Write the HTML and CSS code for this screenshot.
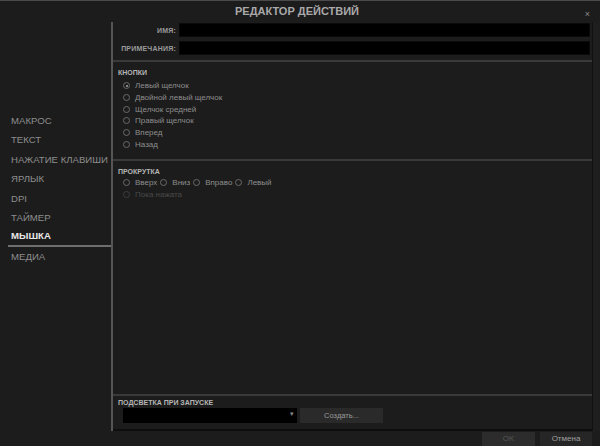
FILE: index.html
```html
<!DOCTYPE html>
<html>
<head>
<meta charset="utf-8">
<link rel="stylesheet" href="styles.css">
</head>
<body>
<div class="window">
  <div class="header">
    <div class="title">РЕДАКТОР ДЕЙСТВИЙ</div>
    <div class="close">×</div>
  </div>
  <div class="main">
    <nav class="nav">
      <div class="nav-item">МАКРОС</div>
      <div class="nav-item">ТЕКСТ</div>
      <div class="nav-item">НАЖАТИЕ КЛАВИШИ</div>
      <div class="nav-item">ЯРЛЫК</div>
      <div class="nav-item">DPI</div>
      <div class="nav-item">ТАЙМЕР</div>
      <div class="nav-item active">МЫШКА</div>
      <div class="nav-item">МЕДИА</div>
    </nav>
    <div class="divider"></div>
    <div class="panel">
      <div class="fields">
        <div class="field"><label class="field-label">ИМЯ:</label><div class="input"></div></div>
        <div class="field"><label class="field-label">ПРИМЕЧАНИЯ:</label><div class="input"></div></div>
      </div>
      <div class="sep"></div>
      <div class="section buttons">
        <div class="section-title">КНОПКИ</div>
        <div class="radio-list">
          <div class="radio checked"><span class="dot"></span>Левый щелчок</div>
          <div class="radio"><span class="dot"></span>Двойной левый щелчок</div>
          <div class="radio"><span class="dot"></span>Щелчок средней</div>
          <div class="radio"><span class="dot"></span>Правый щелчок</div>
          <div class="radio"><span class="dot"></span>Вперед</div>
          <div class="radio"><span class="dot"></span>Назад</div>
        </div>
      </div>
      <div class="sep"></div>
      <div class="section scroll">
        <div class="section-title">ПРОКРУТКА</div>
        <div class="radio-row">
          <div class="radio"><span class="dot"></span>Вверх</div>
          <div class="radio"><span class="dot"></span>Вниз</div>
          <div class="radio"><span class="dot"></span>Вправо</div>
          <div class="radio"><span class="dot"></span>Левый</div>
        </div>
        <div class="radio disabled"><span class="dot"></span>Пока нажата</div>
      </div>
      <div class="spacer"></div>
      <div class="sep"></div>
      <div class="section light">
        <div class="section-title">ПОДСВЕТКА ПРИ ЗАПУСКЕ</div>
        <div class="light-row">
          <div class="select"><span class="arrow">▾</span></div>
          <div class="btn-create">Создать...</div>
        </div>
      </div>
    </div>
    <div class="gutter"></div>
  </div>
  <div class="footer">
    <div class="btn ok">OK</div>
    <div class="btn cancel">Отмена</div>
  </div>
</div>
</body>
</html>
```

FILE: styles.css
```css
* { box-sizing: border-box; }
html, body {
  margin: 0;
  padding: 0;
  background: #1c1c1c;
}
body {
  width: 600px;
  height: 446px;
  overflow: hidden;
  font-family: "Liberation Sans", Arial, sans-serif;
  color: #8c8c8c;
}
.window {
  width: 600px;
  height: 446px;
  display: flex;
  flex-direction: column;
  border-top: 1px solid #4a4a4a;
  background: #1c1c1c;
}
.header {
  height: 21px;
  position: relative;
  display: flex;
  justify-content: center;
  align-items: center;
}
.title {
  font-size: 11px;
  font-weight: bold;
  color: #a9a9a9;
  margin-top: -1px;
  margin-right: 6px;
}
.close {
  position: absolute;
  right: 10px;
  top: 9px;
  font-size: 9px;
  line-height: 9px;
  color: #8a8a8a;
}
.main {
  height: 409px;
  display: flex;
}
.nav {
  width: 111px;
  padding-top: 89px;
  padding-left: 8px;
}
.nav-item {
  height: 19.4px;
  line-height: 19px;
  font-size: 9.6px;
  padding-left: 3px;
  color: #8d8d8d;
  white-space: nowrap;
}
.nav-item.active {
  color: #e8e8e8;
  font-weight: bold;
  border-bottom: 2px solid #6e6e6e;
  height: 20px;
  line-height: 18px;
}
.divider {
  width: 2px;
  background: #555;
}
.panel {
  width: 479px;
  display: flex;
  flex-direction: column;
  border-bottom: 2px solid #0e0e0e;
}
.gutter {
  width: 8px;
  border-left: 1px solid #111;
  background: #1e1e1e;
}
.fields {
  padding-top: 1px;
  display: flex;
  flex-direction: column;
  gap: 4px;
}
.field {
  display: flex;
  align-items: center;
  height: 14px;
}
.field-label {
  width: 64px;
  padding-right: 1px;
  text-align: right;
  font-size: 7px;
  font-weight: bold;
  letter-spacing: 0.2px;
  color: #9a9a9a;
  white-space: nowrap;
}
.input {
  margin-left: 2px;
  width: 411px;
  height: 14px;
  background: #000;
  border: 1px solid #0a0a0a;
}
.sep {
  height: 2px;
  background: #3a3a3a;
}
.fields + .sep { margin-top: 5px; }
.section {
  padding-left: 5px;
}
.section-title {
  font-size: 7px;
  font-weight: bold;
  color: #b5b5b5;
  height: 10px;
  line-height: 10px;
}
.buttons { padding-top: 6px; height: 97px; }
.radio-list {
  padding-left: 5px;
  padding-top: 2px;
}
.radio {
  display: flex;
  align-items: center;
  height: 11.7px;
  font-size: 8px;
  color: #8d8d8d;
  white-space: nowrap;
}
.dot {
  width: 7px;
  height: 7px;
  border: 1px solid #6a6a6a;
  border-radius: 50%;
  margin-right: 5px;
  position: relative;
  flex: none;
}
.radio.checked .dot::after {
  content: "";
  position: absolute;
  left: 1.5px;
  top: 1.5px;
  width: 2px;
  height: 2px;
  border-radius: 50%;
  background: #aaa;
}
.scroll { padding-top: 6px; }
.scroll .radio-row {
  display: flex;
  gap: 3px;
  padding-left: 5px;
}
.scroll > .radio { padding-left: 5px; }
.radio.disabled { color: #4a4a4a; }
.radio.disabled .dot { border-color: #3d3d3d; }
.spacer { flex: 1; }
.light { padding-top: 2px; height: 33px; }
.light-row {
  display: flex;
  gap: 3px;
  padding-left: 5px;
}
.select {
  width: 174px;
  height: 15px;
  background: #000;
  position: relative;
}
.arrow {
  position: absolute;
  right: 3px;
  top: 2px;
  font-size: 7px;
  color: #8a8a8a;
}
.btn-create {
  width: 83px;
  height: 15px;
  background: #2a2a2a;
  font-size: 7.5px;
  color: #9a9a9a;
  text-align: center;
  line-height: 15px;
}
.footer {
  height: 15px;
  display: flex;
  justify-content: flex-end;
  gap: 5px;
  padding-right: 8px;
  padding-top: 1px;
}
.btn {
  height: 14px;
  font-size: 8px;
  line-height: 14px;
  text-align: center;
}
.btn.ok {
  width: 53px;
  background: #2c2c2c;
  color: #555;
}
.btn.cancel {
  width: 52px;
  background: #262626;
  color: #a0a0a0;
}
```
